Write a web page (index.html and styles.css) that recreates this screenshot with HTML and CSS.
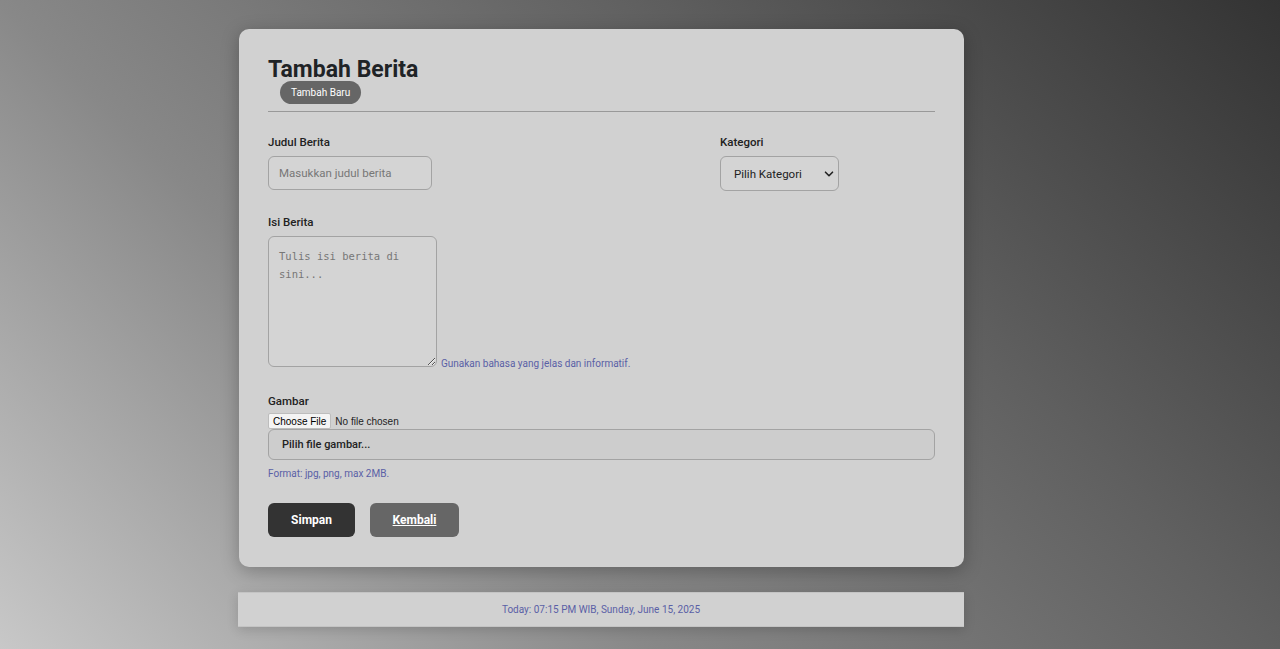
FILE: index.html
```html
<!DOCTYPE html>
<html lang="id">
<head>
<meta charset="utf-8">
<title>Tambah Berita</title>
<link rel="stylesheet" href="styles.css">
</head>
<body>
<main class="page">
  <section class="card">
    <h1 class="title">Tambah Berita</h1>
    <span class="badge">Tambah Baru</span>
    <hr class="divider">
    <form class="form">
      <div class="row">
        <div class="field">
          <label class="label" for="judul">Judul Berita</label>
          <input class="input" id="judul" type="text" placeholder="Masukkan judul berita">
        </div>
        <div class="field">
          <label class="label" for="kat">Kategori</label>
          <div class="select-wrap">
            <select class="select" id="kat">
              <option>Pilih Kategori</option>
            </select>
            <svg class="chev" width="10" height="10" viewBox="0 0 10 10"><path d="M1.5 3.2 L5 6.7 L8.5 3.2" fill="none" stroke="#222" stroke-width="1.6" stroke-linecap="round" stroke-linejoin="round"/></svg>
          </div>
        </div>
      </div>
      <div class="field field-isi">
        <label class="label" for="isi">Isi Berita</label>
        <div class="isi-line"><textarea class="textarea" id="isi" placeholder="Tulis isi berita di sini..."></textarea> <span class="hint">Gunakan bahasa yang jelas dan informatif.</span></div>
      </div>
      <div class="field field-gambar">
        <label class="label" for="file">Gambar</label>
        <input class="file" id="file" type="file">
        <div class="filebox">Pilih file gambar...</div>
        <p class="hint hint-block">Format: jpg, png, max 2MB.</p>
      </div>
      <div class="actions">
        <button type="button" class="btn btn-dark">Simpan</button>
        <a class="btn btn-gray" href="#">Kembali</a>
      </div>
    </form>
  </section>
  <footer class="footer">Today: 07:15 PM WIB, Sunday, June 15, 2025</footer>
</main>
</body>
</html>
```

FILE: styles.css
```css
html, body {
  margin: 0;
  padding: 0;
}
body {
  min-height: 649px;
  background: linear-gradient(45deg, #c8c8c8 0%, #888888 33.6%, #606060 66.4%, #333333 100%);
  font-family: Roboto, "Liberation Sans", Arial, sans-serif;
  color: #222;
}
.page {
  padding: 29px 0 22px 239px;
  width: 726px;
}
.card {
  width: 725px;
  box-sizing: border-box;
  background: #d1d1d1;
  border-radius: 10px;
  padding: 29px 29px 30px 29px;
  box-shadow: 0 4px 18px rgba(0,0,0,0.25);
}
.title {
  margin: 0;
  font-size: 23px;
  line-height: 23px;
  font-weight: 700;
  color: #1f2326;
}
.badge {
  display: inline-block;
  margin: -2px 0 0 12px;
  padding: 5px 11px;
  font-size: 10px;
  line-height: 13px;
  color: #fff;
  background: #666;
  border-radius: 12px;
}
.divider {
  margin: 7px 0 0 0;
  border: 0;
  border-top: 1px solid #999;
  height: 0;
}
.form {
  margin: 0;
}
.row {
  display: grid;
  grid-template-columns: 1fr 215px;
  margin-top: 23px;
}
.field {
  display: flex;
  flex-direction: column;
  align-items: flex-start;
}
.label {
  font-size: 11.5px;
  line-height: 14px;
  font-weight: 500;
  color: #222;
  margin-bottom: 7px;
}
.input {
  box-sizing: border-box;
  width: 164px;
  height: 34px;
  padding: 0 10px;
  font-family: Roboto, "Liberation Sans", Arial, sans-serif;
  font-size: 11.5px;
  border: 1px solid #a3a3a3;
  border-radius: 6px;
  background: #d4d4d4;
  color: #222;
  outline: none;
}
.input::placeholder {
  color: #777;
}
.select-wrap {
  position: relative;
  width: 119px;
  height: 35px;
}
.select {
  appearance: none;
  -webkit-appearance: none;
  box-sizing: border-box;
  width: 119px;
  height: 35px;
  padding: 0 24px 0 13px;
  font-family: Roboto, "Liberation Sans", Arial, sans-serif;
  font-size: 11.5px;
  color: #222;
  border: 1px solid #a3a3a3;
  border-radius: 6px;
  background: #d4d4d4;
}
.chev {
  position: absolute;
  right: 5px;
  top: 13px;
  pointer-events: none;
}
.field-isi {
  margin-top: 24px;
}
.isi-line {
  line-height: 14px;
}
.textarea {
  box-sizing: border-box;
  width: 169px;
  height: 131px;
  padding: 10px 10px;
  font-family: "DejaVu Sans Mono", monospace;
  font-size: 10.5px;
  line-height: 18px;
  border: 1px solid #a3a3a3;
  border-radius: 6px;
  background: #d4d4d4;
  vertical-align: baseline;
  margin: 0;
  resize: both;
}
.textarea::placeholder {
  color: #777;
}
.hint {
  font-size: 10px;
  color: #5a60a6;
}
.field-gambar {
  margin-top: 23px;
}
.field-gambar .label {
  margin-bottom: 5px;
}
.file {
  font-family: "Liberation Sans", Arial, sans-serif;
  font-size: 10px;
  height: 16px;
  color: #222;
}
.file::file-selector-button {
  font-family: "Liberation Sans", Arial, sans-serif;
  font-size: 10px;
  padding: 0 4px;
  height: 16px;
  margin-right: 4px;
  background: #f4f4f4;
  border: 1px solid #bdbdbd;
  border-radius: 2px;
}
.filebox {
  box-sizing: border-box;
  width: 100%;
  height: 31px;
  padding: 0 13px;
  display: flex;
  align-items: center;
  font-size: 11px;
  font-weight: 500;
  color: #222;
  background: #cdcdcd;
  border: 1px solid #a3a3a3;
  border-radius: 6px;
}
.hint-block {
  margin: 7px 0 0 0;
  line-height: 13px;
}
.actions {
  display: flex;
  gap: 15px;
  margin-top: 23px;
}
.btn {
  box-sizing: border-box;
  height: 34px;
  display: inline-flex;
  align-items: center;
  justify-content: center;
  border: 0;
  border-radius: 6px;
  font-family: Roboto, "Liberation Sans", Arial, sans-serif;
  font-size: 12px;
  font-weight: 700;
  color: #fff;
  cursor: pointer;
}
.btn-dark {
  width: 87px;
  background: #333;
}
.btn-gray {
  width: 89px;
  background: #666;
  text-decoration: underline;
}
.footer {
  margin: 25px 0 0 -1px;
  width: 726px;
  height: 35px;
  box-sizing: border-box;
  display: flex;
  align-items: center;
  justify-content: center;
  background: #d1d1d1;
  border-top: 1px solid #c4c4c4;
  border-bottom: 1px solid #c4c4c4;
  font-size: 10px;
  color: #5a60a6;
  box-shadow: 0 3px 12px rgba(0,0,0,0.15);
}
```
